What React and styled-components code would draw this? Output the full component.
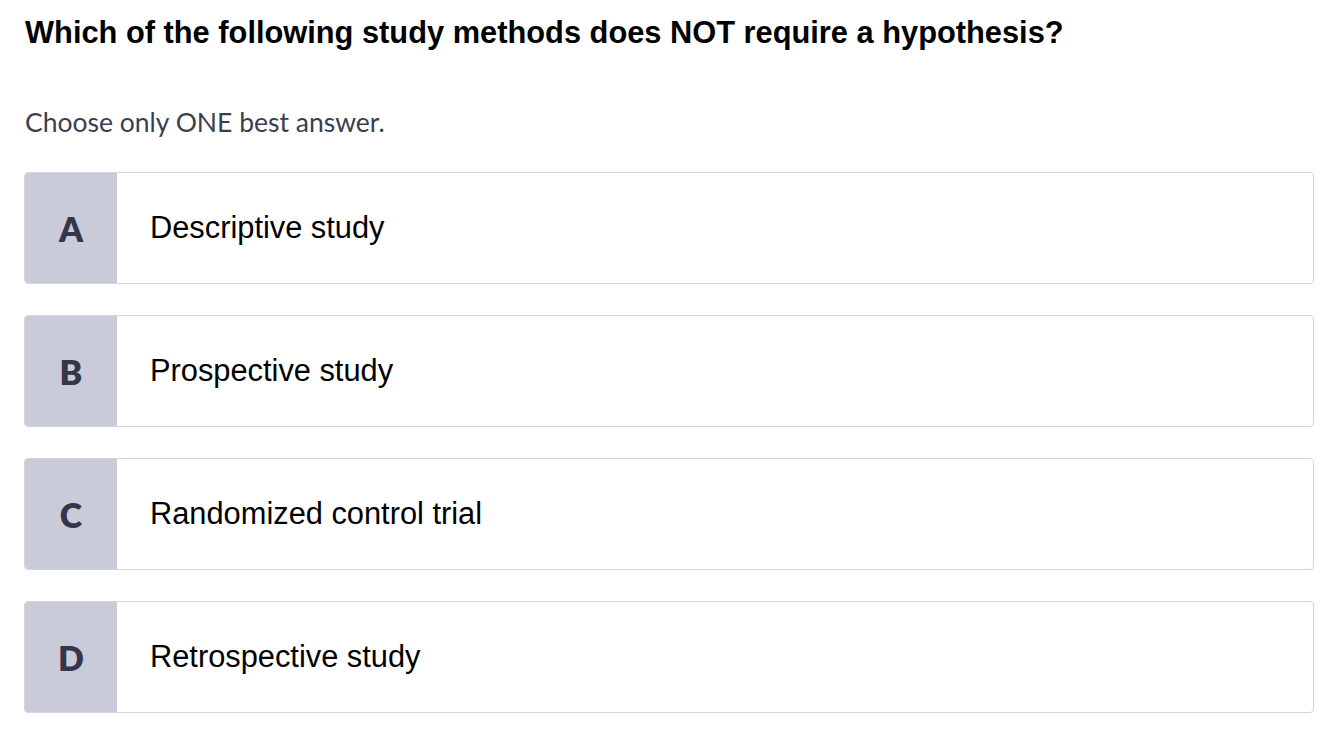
import styled, {createGlobalStyle} from 'styled-components'

const GlobalStyle = createGlobalStyle`
  html, body {
    margin: 0;
    padding: 0;
    background: #ffffff;
  }
  * {
    box-sizing: border-box;
  }
`

const Page = styled.div`
  padding: 13px 20px 0 24px;
  font-family: "Liberation Sans", Arial, sans-serif;
`

const Question = styled.h1`
  margin: 0 0 0 1px;
  font-size: 30.8px;
  font-weight: 700;
  line-height: 40px;
  color: #000;
`

const Hint = styled.p`
  margin: 51px 0 0 1px;
  font-family: Lato, "Open Sans", sans-serif;
  font-size: 26.5px;
  line-height: 36px;
  color: #3b3e50;
`

const Options = styled.div`
  display: flex;
  flex-direction: column;
  gap: 31px;
  margin-top: 32px;
`

const Option = styled.div`
  display: flex;
  height: 112px;
  border: 1.5px solid #d3d5dc;
  border-radius: 4px;
  overflow: hidden;
  background: #fff;
  cursor: pointer;
`

const Letter = styled.div`
  width: 92px;
  flex-shrink: 0;
  display: flex;
  align-items: center;
  justify-content: center;
  background: #c9ccd8;
  font-family: Lato, "Open Sans", sans-serif;
  font-size: 34px;
  font-weight: 800;
  color: #34374a;
`

const Label = styled.div`
  display: flex;
  align-items: center;
  padding-left: 33px;
  font-size: 30.8px;
  color: #000;
`

const answers = [
  ['A', 'Descriptive study'],
  ['B', 'Prospective study'],
  ['C', 'Randomized control trial'],
  ['D', 'Retrospective study'],
]

function App() {
  return (
    <Page>
      <GlobalStyle/>
      <Question>Which of the following study methods does NOT require a hypothesis?</Question>
      <Hint>Choose only ONE best answer.</Hint>
      <Options>
        {answers.map(([key, text]) => (
          <Option key={key}>
            <Letter>{key}</Letter>
            <Label>{text}</Label>
          </Option>
        ))}
      </Options>
    </Page>
  )
}

export default App
